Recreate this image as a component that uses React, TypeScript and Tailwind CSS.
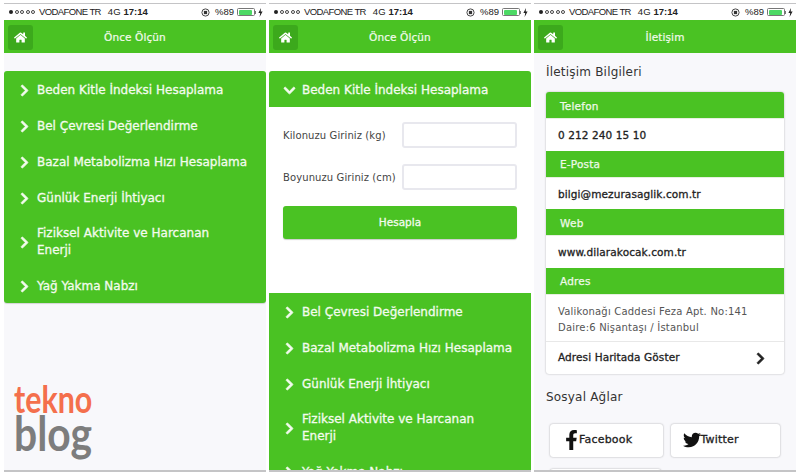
import { FaChevronDown, FaChevronRight, FaFacebookF, FaHome, FaTwitter } from "react-icons/fa";

const green = "bg-[#4ac223]";

const StatusBar = () => (
	<div className="flex h-4 shrink-0 items-center justify-between bg-white pl-[5px] pr-[3px] font-['Liberation_Sans',sans-serif] text-[9.5px] text-[#222]">
		<div className="flex items-center">
			<span className="h-[4px] w-[4px] rounded-full bg-[#222]" />
			{[0, 1, 2, 3].map((i) => (
				<span key={i} className="ml-[1.5px] h-[4px] w-[4px] rounded-full border-[0.5px] border-[#444]" />
			))}
			<span className="ml-[4px] tracking-[-0.6px]">VODAFONE TR</span>
			<span className="ml-[7px]">4G</span>
			<span className="ml-[3px] font-bold">17:14</span>
		</div>
		<div className="flex items-center">
			<svg width="9" height="9" viewBox="0 0 10 10" className="mr-[5px]">
				<circle cx="5" cy="5" r="4" fill="none" stroke="#333" strokeWidth="1" />
				<rect x="3.2" y="3.2" width="3.6" height="3.6" fill="#333" />
			</svg>
			<span>%89</span>
			<div className="ml-[3px] flex h-[8px] w-[18px] items-center rounded-[1.5px] border-[0.5px] border-[#777] p-[0.5px]">
				<div className="h-full w-[89%] rounded-[1px] bg-[#4cd964]" />
			</div>
			<span className="h-[3px] w-[1px] bg-[#777]" />
			<svg width="5" height="9" viewBox="0 0 5 9" className="ml-[2px]">
				<path d="M3 0 L0.4 5 H2.2 L1.6 9 L4.6 3.6 H2.7 Z" fill="#222" />
			</svg>
		</div>
	</div>
);

const Header = ({ title }: { title: string }) => (
	<div className={`relative flex h-[33px] shrink-0 items-center justify-center ${green} pt-[2px]`}>
		<div className="absolute left-[4px] top-[5px] flex h-[25px] w-[25px] items-center justify-center rounded-[3px] bg-[#3ca91c]">
			<FaHome className="text-[13px] text-white" />
		</div>
		<span className="text-[10.5px] tracking-[0.1px] text-[#f2fbec] [-webkit-text-stroke:0.2px]">{title}</span>
	</div>
);

const MenuRow = ({ label, open }: { label: string; open?: boolean }) => (
	<div className="flex min-h-9 items-center pb-[8px] pl-[14px] pr-2 pt-[10px] text-[12px] leading-[17px] text-[#f3fbee] [-webkit-text-stroke:0.3px]">
		{open ? (
			<FaChevronDown className="mr-[6px] shrink-0 text-[13px]" stroke="currentColor" strokeWidth={30} />
		) : (
			<FaChevronRight className="mr-[6px] shrink-0 text-[13px]" stroke="currentColor" strokeWidth={30} />
		)}
		<span className="min-w-0 whitespace-pre-line">{label}</span>
	</div>
);

const Field = ({ label }: { label: string }) => (
	<div className="flex items-center">
		<span className="w-[119px] whitespace-nowrap text-[10px] tracking-[0.1px] text-[#444]">{label}</span>
		<div className="h-[26px] w-[115px] rounded-[3px] border-2 border-[#e8e8ee] bg-white" />
	</div>
);

const InfoHead = ({ label }: { label: string }) => (
	<div className={`${green} flex h-[27px] items-center border-b border-[#e6f0e0] pl-[14px] pt-[3px] text-[10.5px] tracking-[0.2px] text-[#eef9e8] [-webkit-text-stroke:0.25px]`}>
		{label}
	</div>
);

const InfoValue = ({ value }: { value: string }) => (
	<div className="flex h-[31.5px] items-center pl-[12px] pt-[3px] text-[10.5px] tracking-[0.1px] text-[#222] [-webkit-text-stroke:0.3px]">{value}</div>
);

const SocialButton = ({ icon, label, className }: { icon: React.ReactNode; label: string; className: string }) => (
	<div className={`flex h-[33px] flex-1 items-center rounded-[3px] bg-white text-[11px] tracking-[0.2px] text-[#222] shadow-[0_0_2px_rgba(0,0,0,0.35)] [-webkit-text-stroke:0.3px] ${className}`}>
		{icon}
		<span>{label}</span>
	</div>
);

const Phone = ({ children, bg }: { children: React.ReactNode; bg: string }) => (
	<div className={`relative flex h-full w-[262px] shrink-0 flex-col overflow-hidden ${bg}`}>{children}</div>
);

export default function App() {
	return (
		<div className="h-[474px] w-[800px] overflow-hidden bg-white font-['DejaVu_Sans',sans-serif]">
			<div className="flex gap-[3px] pl-[4px] pt-[3px]">
				<div className="h-[1px] w-[262px] bg-[#c4c4c6]" />
				<div className="h-[1px] w-[262px] bg-[#c4c4c6]" />
				<div className="h-[1px] w-[262px] bg-[#c4c4c6]" />
			</div>
			<div className="flex h-[466px] gap-[3px] pl-[4px]">
				<Phone bg="bg-[#f8f8fb]">
					<StatusBar />
					<Header title="Önce Ölçün" />
					<div className={`mt-[18px] rounded-[3px] ${green} shadow-[0_1px_1px_rgba(0,0,0,0.15)]`}>
						<MenuRow label="Beden Kitle İndeksi Hesaplama" />
						<MenuRow label="Bel Çevresi Değerlendirme" />
						<MenuRow label="Bazal Metabolizma Hızı Hesaplama" />
						<MenuRow label="Günlük Enerji İhtiyacı" />
						<MenuRow label={"Fiziksel Aktivite ve Harcanan\nEnerji"} />
						<MenuRow label="Yağ Yakma Nabzı" />
					</div>
					<div className="absolute left-[10px] top-[379px] font-['Lato',sans-serif] font-bold">
						<div className="origin-left scale-x-[0.8] text-[38px] leading-[30px] text-[#f46f4c]">tekno</div>
						<div className="origin-left scale-x-[0.85] text-[48px] leading-[40px] text-[#7d7d7d]">blog</div>
					</div>
				</Phone>

				<Phone bg="bg-white">
					<StatusBar />
					<Header title="Önce Ölçün" />
					<div className="mt-[18px]">
						<div className={`${green} rounded-t-[3px]`}>
							<MenuRow label="Beden Kitle İndeksi Hesaplama" open />
						</div>
						<div className="flex h-[186px] flex-col gap-4 px-[14px] pt-[15px]">
							<Field label="Kilonuzu Giriniz (kg)" />
							<Field label="Boyunuzu Giriniz (cm)" />
							<div className={`${green} flex h-[33px] items-center justify-center rounded-[3px] text-[10.5px] text-[#f3fbee] shadow-[0_1px_1px_rgba(0,0,0,0.2)] [-webkit-text-stroke:0.3px]`}>
								Hesapla
							</div>
						</div>
						<div className={green}>
							<MenuRow label="Bel Çevresi Değerlendirme" />
							<MenuRow label="Bazal Metabolizma Hızı Hesaplama" />
							<MenuRow label="Günlük Enerji İhtiyacı" />
							<MenuRow label={"Fiziksel Aktivite ve Harcanan\nEnerji"} />
							<MenuRow label="Yağ Yakma Nabzı" />
						</div>
					</div>
				</Phone>

				<Phone bg="bg-[#f8f8fb]">
					<StatusBar />
					<Header title="İletişim" />
					<div className="px-3">
						<div className="mt-[10px] text-[12px] leading-[18px] tracking-[0.2px] text-[#333]">İletişim Bilgileri</div>
						<div className="mt-[11px] overflow-hidden rounded-[3px] bg-white shadow-[0_0_2px_rgba(0,0,0,0.3)]">
							<InfoHead label="Telefon" />
							<InfoValue value="0 212 240 15 10" />
							<InfoHead label="E-Posta" />
							<InfoValue value="bilgi@mezurasaglik.com.tr" />
							<InfoHead label="Web" />
							<InfoValue value="www.dilarakocak.com.tr" />
							<InfoHead label="Adres" />
							<div className="border-b border-[#e8e8e8] pb-[5px] pl-[12px] pt-[9px] text-[10px] leading-[16px] tracking-[0.2px] text-[#555]">
								Valikonağı Caddesi Feza Apt. No:141
								<br />
								Daire:6 Nişantaşı / İstanbul
							</div>
							<div className="flex h-[32px] items-center justify-between pl-[12px] pr-[17px] pt-[1px] text-[10.5px] tracking-[0.1px] text-[#222] [-webkit-text-stroke:0.3px]">
								<span>Adresi Haritada Göster</span>
								<FaChevronRight className="text-[13px]" stroke="currentColor" strokeWidth={30} />
							</div>
						</div>
						<div className="mt-[14px] text-[12px] leading-[18px] tracking-[0.2px] text-[#333]">Sosyal Ağlar</div>
						<div className="mt-[18px] flex gap-2 px-1">
							<SocialButton className="pl-[15px]" icon={<FaFacebookF className="mr-[1px] h-[20px] w-[13px] text-[#111]" />} label="Facebook" />
							<SocialButton className="pl-[12px]" icon={<FaTwitter className="h-[18px] w-[18px] text-[#111]" />} label="Twitter" />
						</div>
						<div className="ml-1 mt-[12px] h-[33px] w-[111px] rounded-[3px] bg-white shadow-[0_0_2px_rgba(0,0,0,0.35)]" />
					</div>
				</Phone>
			</div>
			<div className="flex gap-[3px] pl-[4px]">
				<div className="h-[2px] w-[262px] bg-[#c4c4c6]" />
				<div className="h-[2px] w-[262px] bg-[#c4c4c6]" />
				<div className="h-[2px] w-[262px] bg-[#c4c4c6]" />
			</div>
		</div>
	);
}
